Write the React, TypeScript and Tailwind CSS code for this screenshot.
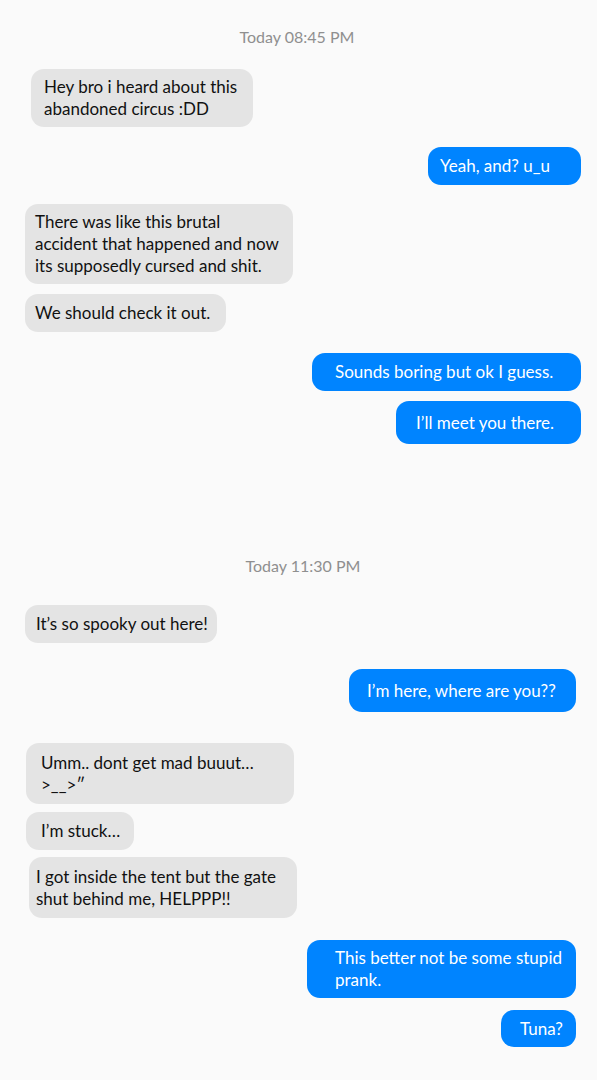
import React from "react";

type B = {
  side: "l" | "r";
  mt: string;
  ml: string;
  w: string;
  h: string;
  pl: string;
  text: string;
};

const font = { fontFamily: "Lato, 'Open Sans', sans-serif" };

function Bubble({ b }: { b: B }) {
  const base =
    b.side === "l"
      ? "bg-[#e4e4e4] text-[#111111]"
      : "bg-[#0084ff] text-white";
  return (
    <div
      className={`${b.mt} ${b.ml} ${b.w} ${b.h} ${b.pl} ${base} flex items-center rounded-[13px] text-[17px] leading-[22px] whitespace-pre-line`}
    >
      {b.text}
    </div>
  );
}

const TS = ({ mt, ml, text }: { mt: string; ml: string; text: string }) => (
  <div className={`${mt} ${ml} w-[140px] h-[20px] text-center text-[16px] leading-[20px] text-[#8f8f8f]`}>
    {text}
  </div>
);

export default function App() {
  return (
    <div className="w-[597px] min-h-[1080px] bg-[#fafafa] flex flex-col" style={font}>
      <TS mt="mt-[27px]" ml="ml-[227px]" text="Today 08:45 PM" />
      <Bubble b={{ side: "l", mt: "mt-[22px]", ml: "ml-[31px]", w: "w-[222px]", h: "h-[58px]", pl: "pl-[13px]", text: "Hey bro i heard about this\nabandoned circus :DD" }} />
      <Bubble b={{ side: "r", mt: "mt-[20px]", ml: "ml-[428px]", w: "w-[153px]", h: "h-[38px]", pl: "pl-[12px]", text: "Yeah, and? u_u" }} />
      <Bubble b={{ side: "l", mt: "mt-[19px]", ml: "ml-[25px]", w: "w-[268px]", h: "h-[80px]", pl: "pl-[10px]", text: "There was like this brutal\naccident that happened and now\nits supposedly cursed and shit." }} />
      <Bubble b={{ side: "l", mt: "mt-[10px]", ml: "ml-[25px]", w: "w-[201px]", h: "h-[38px]", pl: "pl-[10px]", text: "We should check it out." }} />
      <Bubble b={{ side: "r", mt: "mt-[21px]", ml: "ml-[312px]", w: "w-[269px]", h: "h-[38px]", pl: "pl-[23px]", text: "Sounds boring but ok I guess." }} />
      <Bubble b={{ side: "r", mt: "mt-[10px]", ml: "ml-[396px]", w: "w-[185px]", h: "h-[43px]", pl: "pl-[20px]", text: "I\u2019ll meet you there." }} />
      <TS mt="mt-[112px]" ml="ml-[233px]" text="Today 11:30 PM" />
      <Bubble b={{ side: "l", mt: "mt-[29px]", ml: "ml-[25px]", w: "w-[192px]", h: "h-[38px]", pl: "pl-[11px]", text: "It\u2019s so spooky out here!" }} />
      <Bubble b={{ side: "r", mt: "mt-[26px]", ml: "ml-[349px]", w: "w-[227px]", h: "h-[43px]", pl: "pl-[18px]", text: "I\u2019m here, where are you??" }} />
      <Bubble b={{ side: "l", mt: "mt-[31px]", ml: "ml-[26px]", w: "w-[268px]", h: "h-[61px]", pl: "pl-[15px]", text: "Umm.. dont get mad buuut\u2026\n>__>\u2033" }} />
      <Bubble b={{ side: "l", mt: "mt-[8px]", ml: "ml-[26px]", w: "w-[108px]", h: "h-[38px]", pl: "pl-[15px]", text: "I\u2019m stuck\u2026" }} />
      <Bubble b={{ side: "l", mt: "mt-[7px]", ml: "ml-[29px]", w: "w-[268px]", h: "h-[61px]", pl: "pl-[7px]", text: "I got inside the tent but the gate\nshut behind me, HELPPP!!" }} />
      <Bubble b={{ side: "r", mt: "mt-[22px]", ml: "ml-[307px]", w: "w-[269px]", h: "h-[58px]", pl: "pl-[28px]", text: "This better not be some stupid\nprank." }} />
      <Bubble b={{ side: "r", mt: "mt-[12px]", ml: "ml-[501px]", w: "w-[75px]", h: "h-[37px]", pl: "pl-[19px]", text: "Tuna?" }} />
    </div>
  );
}
